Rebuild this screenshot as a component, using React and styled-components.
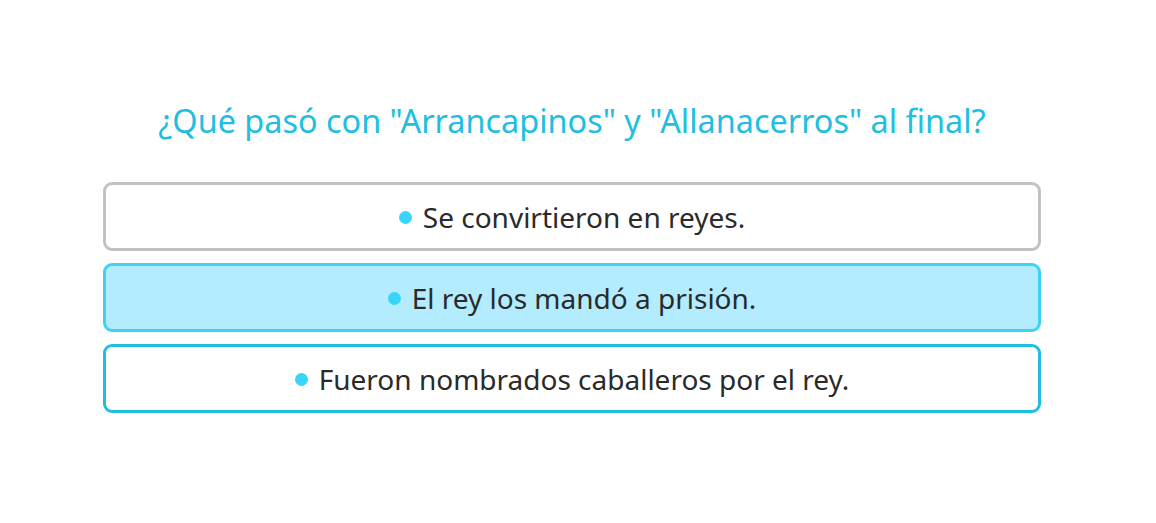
import React from 'react';
import styled, { createGlobalStyle } from 'styled-components';

const options = [
    { text: 'Se convirtieron en reyes.', state: 'idle' },
    { text: 'El rey los mandó a prisión.', state: 'selected' },
    { text: 'Fueron nombrados caballeros por el rey.', state: 'hover' },
];

const borders = {
    idle: '#c2c2c2',
    selected: '#3dd3f4',
    hover: '#1fbfdd',
};

const GlobalStyle = createGlobalStyle`
    body {
        margin: 0;
        background: #ffffff;
        font-family: "Noto Sans", "Open Sans", sans-serif;
    }
`;

const Page = styled.div`
    width: 1144px;
    padding-top: 98px;
    display: flex;
    flex-direction: column;
    align-items: center;
`;

const Question = styled.h2`
    margin: 0 0 40px;
    font-size: 32.4px;
    font-weight: 400;
    line-height: 44px;
    color: #20bedf;
    text-align: center;
`;

const OptionList = styled.div`
    width: 938px;
    display: flex;
    flex-direction: column;
    gap: 12px;
`;

const Option = styled.div`
    height: 63px;
    display: flex;
    align-items: center;
    justify-content: center;
    gap: 11px;
    border: 3px solid ${(p) => borders[p.$state]};
    border-radius: 9px;
    background: ${(p) => (p.$state === 'selected' ? '#b3ecfe' : '#ffffff')};
    font-size: 28px;
    color: #2a2a2a;
`;

const Bullet = styled.span`
    width: 13px;
    height: 13px;
    margin-top: 2px;
    border-radius: 50%;
    background: #3ad4f8;
    flex-shrink: 0;
`;

export default function App() {
    return (
        <>
            <GlobalStyle />
            <Page>
                <Question>¿Qué pasó con "Arrancapinos" y "Allanacerros" al final?</Question>
                <OptionList>
                    {options.map((option, index) => (
                        <Option key={index} $state={option.state}>
                            <Bullet />
                            <span>{option.text}</span>
                        </Option>
                    ))}
                </OptionList>
            </Page>
        </>
    );
}
